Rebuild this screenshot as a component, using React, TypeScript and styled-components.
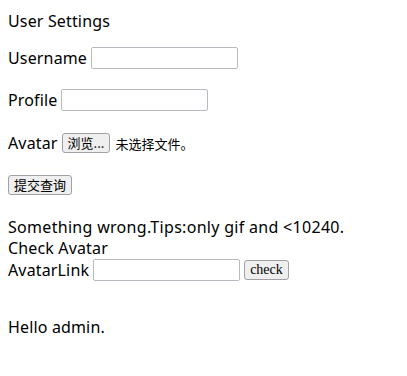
import React from "react";
import styled, { createGlobalStyle } from "styled-components";

const Global = createGlobalStyle`
  html, body { margin: 0; padding: 0; background: #ffffff; }
  body {
    font-family: "Noto Sans", "Noto Sans CJK SC", sans-serif;
    font-size: 16px;
    letter-spacing: 0.15px;
    color: #000000;
  }
`;

const Page = styled.div`
  padding: 11px 8px 8px 8px;
  display: flex;
  flex-direction: column;
  align-items: flex-start;
`;

const TextLine = styled.div<{ $top?: number; $wide?: boolean }>`
  height: 21px;
  line-height: 21px;
  margin-top: ${(p) => p.$top ?? 0}px;
  letter-spacing: ${(p) => (p.$wide ? "0.3px" : "0.15px")};
  white-space: nowrap;
`;

const Row = styled.div<{ $top: number }>`
  display: flex;
  align-items: center;
  gap: 4px;
  height: 22px;
  line-height: 21px;
  margin-top: ${(p) => p.$top}px;
  white-space: nowrap;
`;

const Input = styled.input<{ $w?: number }>`
  box-sizing: border-box;
  width: ${(p) => p.$w ?? 147}px;
  height: 22px;
  margin: 0;
  padding: 1px 2px;
  border: 1px solid #b9b9bf;
  border-radius: 2px;
  background: #ffffff;
  outline: none;
`;

const Button = styled.button<{ $serif?: boolean }>`
  box-sizing: border-box;
  height: 20px;
  margin: 0;
  padding: 0 5px;
  border: 1px solid #a0a0a6;
  border-radius: 3px;
  background: #efefef;
  color: #000000;
  letter-spacing: 0;
  font-family: ${(p) =>
    p.$serif ? '"Liberation Serif", serif' : '"Noto Sans CJK SC", sans-serif'};
  font-size: ${(p) => (p.$serif ? "14px" : "13px")};
  line-height: 18px;
`;

const FileNote = styled.span`
  font-family: "Noto Sans CJK SC", sans-serif;
  font-size: 13px;
  letter-spacing: 0;
  margin-left: 1px;
`;

export default function App() {
  return (
    <>
      <Global />
      <Page>
        <TextLine>User Settings</TextLine>
        <Row $top={15}>
          Username <Input />
        </Row>
        <Row $top={20}>
          Profile <Input />
        </Row>
        <Row $top={21}>
          Avatar <Button>浏览...</Button>
          <FileNote>未选择文件。</FileNote>
        </Row>
        <Row $top={20}>
          <Button>提交查询</Button>
        </Row>
        <TextLine $top={21} $wide>
          Something wrong.Tips:only gif and &lt;10240.
        </TextLine>
        <TextLine>Check Avatar</TextLine>
        <Row $top={0}>
          AvatarLink <Input />
          <Button $serif>check</Button>
        </Row>
        <TextLine $top={36}>Hello admin.</TextLine>
      </Page>
    </>
  );
}
